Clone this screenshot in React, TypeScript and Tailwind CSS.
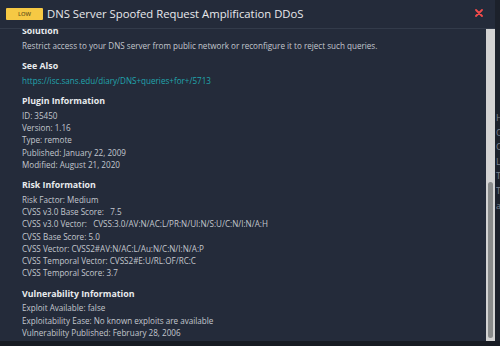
import React from "react";

const sections: { title: string; lines: string[] }[] = [
  {
    title: "Plugin Information",
    lines: ["ID: 35450", "Version: 1.16", "Type: remote", "Published: January 22, 2009", "Modified: August 21, 2020"],
  },
  {
    title: "Risk Information",
    lines: [
      "Risk Factor: Medium",
      "CVSS v3.0 Base Score:   7.5",
      "CVSS v3.0 Vector:   CVSS:3.0/AV:N/AC:L/PR:N/UI:N/S:U/C:N/I:N/A:H",
      "CVSS Base Score: 5.0",
      "CVSS Vector: CVSS2#AV:N/AC:L/Au:N/C:N/I:N/A:P",
      "CVSS Temporal Vector: CVSS2#E:U/RL:OF/RC:C",
      "CVSS Temporal Score: 3.7",
    ],
  },
  {
    title: "Vulnerability Information",
    lines: [
      "Exploit Available: false",
      "Exploitability Ease: No known exploits are available",
      "Vulnerability Published: February 28, 2006",
    ],
  },
];

function Heading({ children }: { children: React.ReactNode }) {
  return <p className="text-[8.8px] font-bold leading-[15.75px] text-[#e9ebee]">{children}</p>;
}

function Line({ children }: { children: React.ReactNode }) {
  return <p className="whitespace-pre text-[8.1px] leading-[12.25px] text-[#c3c7ce]">{children}</p>;
}

export default function App() {
  return (
    <div className="flex h-[346px] w-[500px] flex-col overflow-hidden bg-[#171b23] font-['Open_Sans',sans-serif]">
      <div className="flex h-[341px] shrink-0">
        <div className="flex w-[495px] shrink-0 flex-col bg-[#242b3a]">
          <header className="flex h-[29px] shrink-0 items-center border-b border-[#333b4a] pl-[6px] pr-[12px]">
            <span className="flex h-[12px] w-[37px] items-center justify-center rounded-[1px] bg-[#f6c944] text-[5.8px] font-semibold text-[#6d5a1c]">
              LOW
            </span>
            <h1 className="ml-[4px] flex-1 text-[11.3px] leading-none text-[#e8e9ec]">
              DNS Server Spoofed Request Amplification DDoS
            </h1>
            <svg width="8" height="8" viewBox="0 0 8 8" className="mb-[2px]">
              <path d="M1 1L7 7M7 1L1 7" stroke="#f24b4b" strokeWidth="1.8" strokeLinecap="round" />
            </svg>
          </header>
          <div className="flex min-h-0 flex-1">
            <div className="min-w-0 flex-1 overflow-hidden pl-[22px]">
              <div className="mt-[-5px]">
                <Heading>Solution</Heading>
                <Line>Restrict access to your DNS server from public network or reconfigure it to reject such queries.</Line>
                <div className="mt-[7px]">
                  <Heading>See Also</Heading>
                  <p className="text-[8.1px] leading-[12.25px] text-[#21a5ad]">
                    https://isc.sans.edu/diary/DNS+queries+for+/5713
                  </p>
                </div>
                {sections.map((s) => (
                  <div key={s.title} className="mt-[7px]">
                    <Heading>{s.title}</Heading>
                    {s.lines.map((l) => (
                      <Line key={l}>{l}</Line>
                    ))}
                  </div>
                ))}
              </div>
            </div>
            <div className="flex w-[9px] shrink-0 flex-col bg-[#d3d3d3] px-[2px] pb-[3px]">
              <div className="flex-1" />
              <div className="h-[156px] rounded-full bg-[#8a8c8c]" />
            </div>
          </div>
        </div>
        <div className="flex-1 overflow-hidden bg-[#1c212b] pl-[1px] pt-[111px] text-[9px] leading-[14.6px] text-[#7d828b]">
          {["H", "C", "C", "L", "Te", "Te", "a"].map((t, i) => (
            <p key={i} className="whitespace-nowrap">{t}</p>
          ))}
        </div>
      </div>
    </div>
  );
}
